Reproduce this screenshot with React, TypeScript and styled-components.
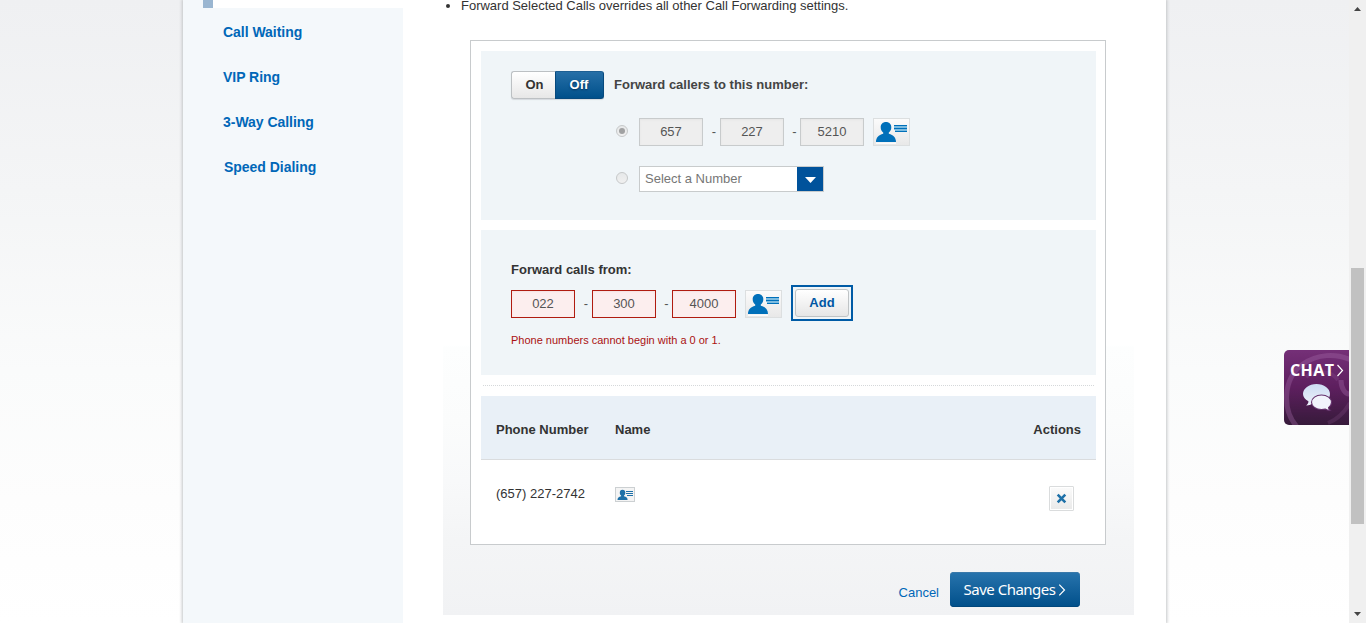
import React from 'react';
import styled, { createGlobalStyle, css } from 'styled-components';

const Global = createGlobalStyle`
  *, *::before, *::after { box-sizing: border-box; }
  body { margin: 0; overflow: hidden; font-family: "Liberation Sans", Arial, sans-serif; font-size: 13px; color: #333; }
  button, input { font-family: inherit; font-size: inherit; margin: 0; }
  ul { margin: 0; padding: 0; list-style: none; }
`;

const Page = styled.div`
  position: relative;
  display: flex;
  width: 1366px;
  height: 623px;
  overflow: hidden;
`;

const Viewport = styled.div`
  width: 1349px;
  display: flex;
  padding-left: 183px;
  background: linear-gradient(#eff0f2 0, #f4f5f6 190px, #fafbfb 370px, #fdfdfd 500px, #fff 100%);
`;

const Sheet = styled.div`
  display: flex;
  width: 983px;
  background: #fff;
  box-shadow: 0 0 3px 1px #c3c5c7;
`;

const Sidebar = styled.nav`
  width: 220px;
  background: #f4f8fb;
`;

const ActiveStrip = styled.div`
  height: 8px;
  margin-left: 20px;
  border-left: 10px solid #9ab6d1;
  background: #fff;
`;

const NavList = styled.ul`
  padding: 2px 0 0 40px;
`;

const NavItem = styled.li<{ $indent?: number }>`
  height: 45px;
  padding-left: ${(p) => p.$indent ?? 0}px;
  line-height: 45px;
  font-size: 14px;
  letter-spacing: -0.03px;
  font-weight: bold;
  color: #0067b8;
  white-space: nowrap;
`;

const Main = styled.main`
  width: 763px;
  padding-left: 40px;
`;

const Content = styled.div`
  width: 691px;
  height: 615px;
  padding-left: 27px;
  background: linear-gradient(#fff 0, #fff 345px, #fdfefe 347px, #fbfcfc 420px, #f8f9fa 480px, #f4f5f6 540px, #f1f2f4 100%);
`;

const Notes = styled.ul`
  height: 40px;
  margin-left: -9px;
`;

const Note = styled.li`
  display: flex;
  align-items: center;
  gap: 11px;
  height: 11px;
  line-height: 11px;
  white-space: nowrap;
  letter-spacing: -0.01px;
  &::before {
    content: '';
    width: 4px;
    height: 4px;
    margin-left: -15px;
    border-radius: 50%;
    background: #333;
  }
`;

const Card = styled.section`
  width: 636px;
  height: 505px;
  padding: 10px;
  border: 1px solid #c8cbcd;
  background: #fff;
`;

const Panel = styled.div<{ $height: number; $top: number }>`
  width: 615px;
  height: ${(p) => p.$height}px;
  margin-bottom: 10px;
  padding: ${(p) => p.$top}px 0 0 30px;
  background: #f0f5f8;
`;

const Row = styled.div<{ $height: number; $top?: number; $indent?: number }>`
  display: flex;
  align-items: center;
  height: ${(p) => p.$height}px;
  margin-top: ${(p) => p.$top ?? 0}px;
  margin-left: ${(p) => p.$indent ?? 0}px;
`;

const Label = styled.span<{ $lift?: number; $color?: string; $left?: number }>`
  font-weight: bold;
  margin-left: ${(p) => p.$left ?? 0}px;
  padding-bottom: ${(p) => p.$lift ?? 0}px;
  color: ${(p) => p.$color ?? '#333'};
  white-space: nowrap;
`;

const Toggle = styled.div`
  display: flex;
  width: 93px;
  height: 28px;
  border-radius: 3px;
  box-shadow: 0 1px 1px #d5dade;
`;

const ToggleOption = styled.button<{ $on?: boolean }>`
  width: ${(p) => (p.$on ? 49 : 44)}px;
  height: 28px;
  padding: 0;
  font-weight: bold;
  line-height: 26px;
  ${(p) =>
    p.$on
      ? css`
          padding-right: 1px;
          color: #fff;
          border: 1px solid #07497d;
          border-top-color: #1d5f93;
          border-radius: 0 3px 3px 0;
          background: linear-gradient(#266fa7, #00508b);
          text-shadow: 0 1px 2px #003059;
        `
      : css`
          color: #333;
          padding-left: 2px;
          border: 1px solid #bcc0c3;
          border-right: 0;
          border-radius: 3px 0 0 3px;
          background: linear-gradient(#fff, #e7e7e7);
        `}
`;

const Radio = styled.span<{ $checked?: boolean }>`
  display: flex;
  align-items: center;
  justify-content: center;
  width: 12px;
  height: 12px;
  margin: 0 11px 2px 0;
  border: 1px solid #c6c8c9;
  border-radius: 50%;
  background: linear-gradient(#e6e8e9, #f0f0f0);
  &::after {
    content: '';
    width: 6px;
    height: 6px;
    border-radius: 50%;
    background: ${(p) => (p.$checked ? '#a0a1a2' : 'transparent')};
  }
`;

const Digits = styled.input<{ $error?: boolean }>`
  width: 64px;
  height: 28px;
  padding: 0 0 1px;
  text-align: center;
  font-size: 13px;
  color: #555;
  border: 1px solid ${(p) => (p.$error ? '#b01c10' : '#c8cbcc')};
  border-radius: 0;
  outline: 0;
  background: ${(p) => (p.$error ? '#fceeee' : '#eee')};
  box-shadow: inset 0 1px 2px ${(p) => (p.$error ? '#f5e2e2' : '#e5e5e5')};
`;

const Dash = styled.span<{ $width?: number }>`
  width: ${(p) => p.$width ?? 17}px;
  padding: 0 0 2px 5px;
  text-align: center;
  color: #555;
`;

const CardButton = styled.button`
  display: flex;
  width: 37px;
  height: 28px;
  margin-left: 9px;
  padding: 0;
  border: 1px solid #dcdfe0;
  background: linear-gradient(#fbfbfb, #e8e8e8);
`;

const SelectBox = styled.div`
  display: flex;
  justify-content: space-between;
  width: 185px;
  height: 26px;
  padding-left: 5px;
  border: 1px solid #c8cbcc;
  background: #fff;
  line-height: 23px;
  color: #767676;
`;

const SelectArrow = styled.span`
  display: flex;
  align-items: center;
  justify-content: center;
  width: 26px;
  height: 24px;
  background: #00529b;
`;

const AddFocus = styled.div`
  display: flex;
  align-items: center;
  justify-content: center;
  width: 62px;
  height: 36px;
  margin: -2px 0 0 9px;
  flex: none;
  border: 2px solid #005ba6;
`;

const AddButton = styled.button`
  width: 54px;
  height: 28px;
  padding: 0 0 1px;
  font-weight: bold;
  color: #0057a4;
  border: 1px solid #bfc3c5;
  border-radius: 3px;
  background: linear-gradient(#fff, #e6e6e6);
`;

const ErrorText = styled.p`
  margin: 16px 0 0;
  font-size: 11px;
  line-height: 13px;
  color: #aa1111;
`;

const DottedRule = styled.div`
  width: 611px;
  height: 1px;
  margin: 0 0 10px 2px;
  background: repeating-linear-gradient(90deg, #d5d8da 0 1px, #fff 1px 2px);
`;

const TableRow = styled.div<{ $head?: boolean }>`
  display: grid;
  grid-template-columns: 119px 1fr auto;
  align-items: ${(p) => (p.$head ? 'center' : 'start')};
  width: 615px;
  height: 64px;
  padding: ${(p) => (p.$head ? '4px 15px 0' : '26px 22px 0 15px')};
  ${(p) => p.$head && 'background: #e9f0f7; border-bottom: 1px solid #dadcde;'}
`;

const PhoneCell = styled.span`
  line-height: 16px;
`;

const SmallCard = styled.button`
  display: flex;
  width: 20px;
  height: 15px;
  margin-top: 1px;
  padding: 0;
  border: 1px solid #ccd0d2;
  background: #f4f4f4;
`;

const DeleteButton = styled.button`
  display: flex;
  align-items: center;
  justify-content: center;
  width: 25px;
  height: 25px;
  padding: 0;
  border: 1px solid #dadcdd;
  border-radius: 1px;
  background: linear-gradient(#fbfbfb, #e9e9e9);
  box-shadow: inset 0 0 0 1px #fff;
`;

const Footer = styled.div`
  display: flex;
  width: 610px;
  height: 35px;
  margin-top: 27px;
  justify-content: flex-end;
`;

const Cancel = styled.a`
  margin: 13px 11px 0 0;
  line-height: 16px;
  color: #0067b8;
`;

const SaveButton = styled.button`
  display: flex;
  align-items: center;
  width: 130px;
  height: 35px;
  padding: 0 0 0 13px;
  gap: 2px;
  border: 0;
  border-radius: 4px;
  background: linear-gradient(#2874ad, #004f8a);
  box-shadow: inset 0 1px #3a79aa, inset 0 -1px #00477c;
  color: #fff;
`;

const SaveLabel = styled.span`
  width: 93px;
  margin-top: -1px;
  font: 15px/20px "Noto Sans", "Open Sans", sans-serif;
  letter-spacing: -0.5px;
  white-space: nowrap;
`;

const Chat = styled.button`
  position: absolute;
  left: 1284px;
  top: 350px;
  width: 65px;
  height: 75px;
  padding: 0;
  border: 0;
  border-radius: 5px 0 0 5px;
  overflow: hidden;
  background: linear-gradient(#753078, #5e205f 50%, #371b3b);
`;

const Scrollbar = styled.div`
  display: flex;
  flex-direction: column;
  align-items: center;
  width: 17px;
  padding: 7px 0 6px;
  background: #f0f0f0;
`;

const Thumb = styled.div`
  width: 13px;
  height: 256px;
  margin: 257px 0 88px;
  background: #c1c1c1;
`;

const ContactIcon = () => (
  <svg width="35" height="26" viewBox="0 0 35 26">
    <path d="M2 23.500h20v1.300H2z" fill="#fff" />
    <path d="M12 3c3.200 0 5.300 2.100 5.300 5.200 0 2.300-.9 4.100-2.500 5.300v1.200c4.700 1.100 7.200 4.100 7.200 8.300H2c0-4.200 2.500-7.200 7.200-8.300v-1.200C7.600 12.300 6.700 10.500 6.700 8.200 6.700 5.100 8.800 3 12 3z" fill="#0070ba" />
    <path d="M20 6h13v1H20zm0 3h13v1H20zm1 3h12v1H21z" fill="#0070ba" />
    <path d="M20 7h13v1H20zm0 3h13v1H20zm0-2h13v1H20zm1 3h12v1H21z" fill="#7dbce0" />
  </svg>
);

const SmallContactIcon = () => (
  <svg width="18" height="13" viewBox="0 0 18 13">
    <path d="M6.500 1.800c1.900 0 2.800 1.200 2.800 2.900 0 1.300-.5 2.200-1.300 2.700v.8c2.400.4 3.600 1.500 3.600 3.800H1.500c0-2.300 1.200-3.400 3.600-3.800v-.8c-.8-.5-1.300-1.400-1.300-2.700 0-1.700.8-2.900 2.700-2.900z" fill="#1d70a8" />
    <path d="M10 3h7v1h-7zm0 2h7v1h-7zm1 2h6v1h-6z" fill="#1d70a8" />
  </svg>
);

const CrossIcon = () => (
  <svg width="11" height="11" viewBox="0 0 11 11">
    <path d="M1.700 1.700l7.600 7.600M9.300 1.700L1.700 9.300" stroke="#1d70a8" strokeWidth="2.600" />
  </svg>
);

const Chevron = () => (
  <svg width="8" height="12" viewBox="0 0 8 12" fill="none">
    <path d="M1.300.6L6.500 6l-5.200 5.400" stroke="#fff" strokeWidth="1.200" />
  </svg>
);

const ScrollArrow = ({ down }: { down?: boolean }) => (
  <svg width="7" height="4" viewBox="0 0 7 4">
    <path d={down ? 'M0 0h7L3.500 4z' : 'M0 4h7L3.500 0z'} fill="#454545" />
  </svg>
);

const ChatArt = () => (
  <svg width="65" height="75" viewBox="0 0 65 75">
    <defs>
      <linearGradient id="bubble" x2="0" y2="1">
        <stop stopColor="#cddcf3" />
        <stop offset="1" stopColor="#edf0fa" />
      </linearGradient>
    </defs>
    <g fill="none" stroke="#a56aa8" opacity=".36">
      <path d="M14 78C-2 61-2 29 19 14 33 4 52 3 67 10" strokeWidth="5" />
      <path d="M57 30c0 8 4 15 10 14" strokeWidth="5" />
      <path d="M22 27c9-7 25-7 32 3M44 73c8-3 16-10 22-20" strokeWidth="4" opacity=".5" />
    </g>
    <path d="M32.500 34C40 34 46 38.500 46 44s-6 10-13.500 10c-1.500 0-3-.2-4.300-.5-1.700 1.500-3.700 2-6 1.900 1.500-1 2.300-2.400 2.200-4.100C21 49.500 19 46.900 19 44c0-5.500 6-10 13.500-10z" fill="url(#bubble)" />
    <path d="M37.500 45c5.500 0 10 3.300 10 7.300 0 2.200-1.200 4-3 5.300 0 1 .6 1.900 1.600 2.700-2 0-3.700-.4-4.900-1.300-1.200.4-2.400.5-3.700.5-5.500 0-10-3.200-10-7.200s4.500-7.300 10-7.300z" fill="#f2f3fc" stroke="#65306c" strokeWidth="1.100" />
    <text x="6" y="26" fill="#fff" fontFamily="Open Sans, sans-serif" fontWeight="700" fontSize="16" textLength="44">CHAT</text>
    <path d="M53.500 15l5 5.500-5 5.500" fill="none" stroke="#fff" strokeWidth="1.200" />
  </svg>
);

const NAV: [string, number][] = [
  ['Call Waiting', 0],
  ['VIP Ring', 0],
  ['3-Way Calling', 0],
  ['Speed Dialing', 1],
];

function PhoneFields({ parts, error }: { parts: string[]; error?: boolean }) {
  return (
    <>
      <Digits readOnly value={parts[0]} $error={error} />
      <Dash>-</Dash>
      <Digits readOnly value={parts[1]} $error={error} />
      <Dash $width={16}>-</Dash>
      <Digits readOnly value={parts[2]} $error={error} />
      <CardButton aria-label="Contacts"><ContactIcon /></CardButton>
    </>
  );
}

export default function App() {
  return (
    <Page>
      <Global />
      <Viewport>
        <Sheet>
          <Sidebar>
            <ActiveStrip />
            <NavList>
              {NAV.map(([name, indent]) => (
                <NavItem key={name} $indent={indent}>{name}</NavItem>
              ))}
            </NavList>
          </Sidebar>
          <Main>
            <Content>
              <Notes>
                <Note>Forward Selected Calls overrides all other Call Forwarding settings.</Note>
              </Notes>
              <Card>
                <Panel $height={169} $top={20}>
                  <Row $height={28}>
                    <Toggle>
                      <ToggleOption>On</ToggleOption>
                      <ToggleOption $on>Off</ToggleOption>
                    </Toggle>
                    <Label $left={10} $lift={2} $color="#444">Forward callers to this number:</Label>
                  </Row>
                  <Row $height={28} $top={19} $indent={105}>
                    <Radio $checked />
                    <PhoneFields parts={['657', '227', '5210']} />
                  </Row>
                  <Row $height={26} $top={20} $indent={105}>
                    <Radio />
                    <SelectBox>
                      Select a Number
                      <SelectArrow>
                        <svg width="11" height="7" viewBox="0 0 11 7"><path d="M0 1h11L5.500 7z" fill="#fff" /></svg>
                      </SelectArrow>
                    </SelectBox>
                  </Row>
                </Panel>
                <Panel $height={145} $top={31}>
                  <Row $height={16}><Label>Forward calls from:</Label></Row>
                  <Row $height={28} $top={13}>
                    <PhoneFields parts={['022', '300', '4000']} error />
                    <AddFocus><AddButton>Add</AddButton></AddFocus>
                  </Row>
                  <ErrorText>Phone numbers cannot begin with a 0 or 1.</ErrorText>
                </Panel>
                <DottedRule />
                <TableRow $head>
                  <Label>Phone Number</Label>
                  <Label>Name</Label>
                  <Label>Actions</Label>
                </TableRow>
                <TableRow>
                  <PhoneCell>(657) 227-2742</PhoneCell>
                  <SmallCard aria-label="Contact"><SmallContactIcon /></SmallCard>
                  <DeleteButton aria-label="Delete"><CrossIcon /></DeleteButton>
                </TableRow>
              </Card>
              <Footer>
                <Cancel>Cancel</Cancel>
                <SaveButton>
                  <SaveLabel>Save Changes</SaveLabel>
                  <Chevron />
                </SaveButton>
              </Footer>
            </Content>
          </Main>
        </Sheet>
      </Viewport>
      <Scrollbar>
        <ScrollArrow />
        <Thumb />
        <ScrollArrow down />
      </Scrollbar>
      <Chat aria-label="Chat"><ChatArt /></Chat>
    </Page>
  );
}
